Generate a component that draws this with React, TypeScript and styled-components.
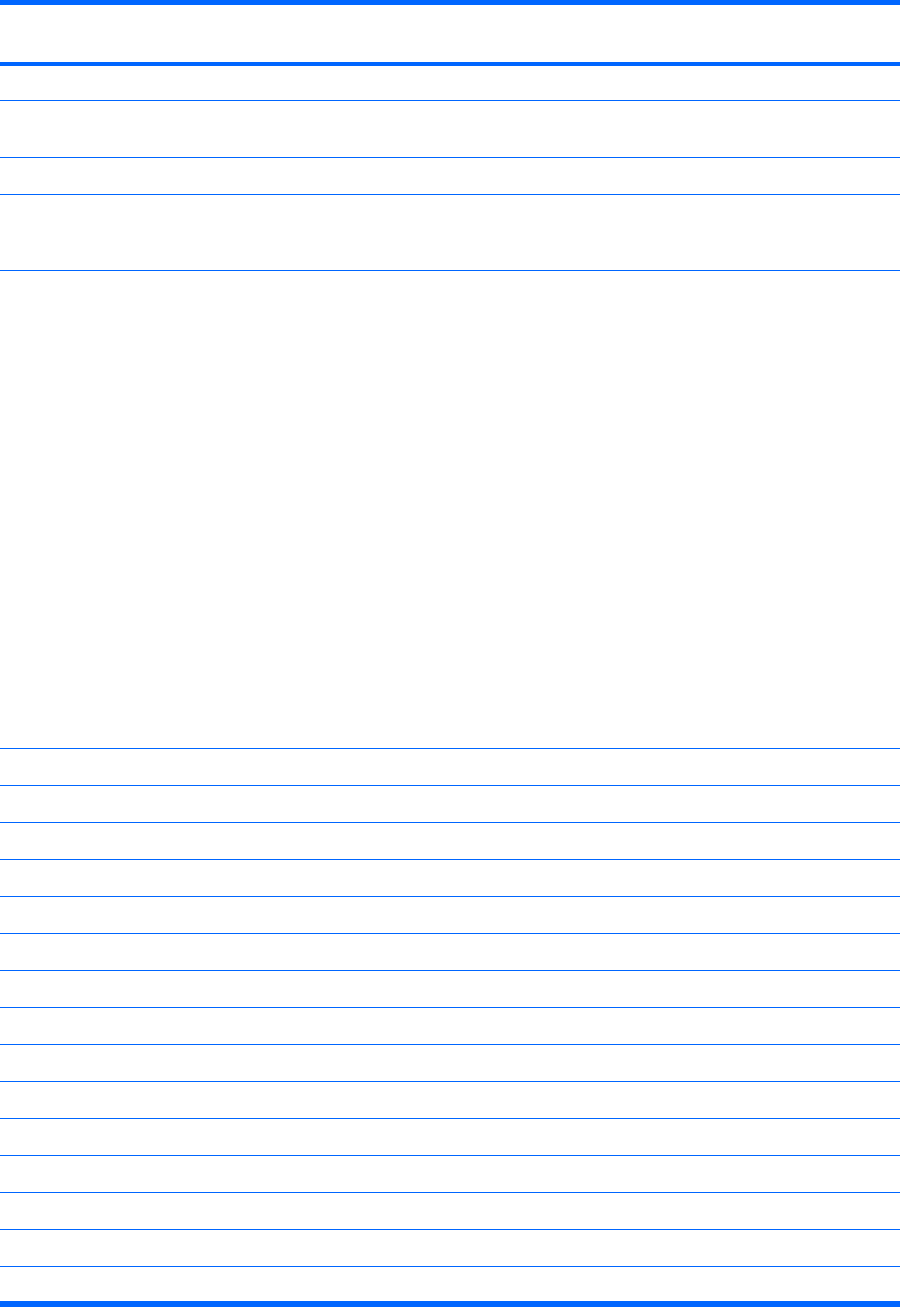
import React from 'react';
import styled, { createGlobalStyle } from 'styled-components';

const blue = '#0066ff';

const GlobalStyle = createGlobalStyle`
  html, body {
    margin: 0;
    padding: 0;
    background: #ffffff;
  }
  body {
    font-family: "Liberation Sans", Arial, sans-serif;
    font-size: 13px;
    color: #ffffff;
  }
`;

const Table = styled.div`
  width: 900px;
  display: flex;
  flex-direction: column;
  border-top: 5px solid ${blue};
  border-bottom: 6px solid ${blue};
`;

const HeaderRow = styled.div`
  height: 57px;
  border-bottom: 4px solid ${blue};
  display: grid;
  grid-template-columns: 1fr 2fr;
`;

const Row = styled.div<{ $h: number; $last?: boolean }>`
  height: ${(p) => p.$h}px;
  border-bottom: ${(p) => (p.$last ? 'none' : `1px solid ${blue}`)};
  display: grid;
  grid-template-columns: 1fr 2fr;
`;

const Cell = styled.div`
  padding: 6px 8px;
`;

// content heights (without the 1px rule), read off the screenshot
const rows = [34, 56, 36, 75, 477, ...Array(14).fill(36), 34];

export default function App() {
  return (
    <>
      <GlobalStyle />
      <Table>
        <HeaderRow>
          <Cell />
          <Cell />
        </HeaderRow>
        {rows.map((h, i) => (
          <Row key={i} $h={h} $last={i === rows.length - 1}>
            <Cell />
            <Cell />
          </Row>
        ))}
      </Table>
    </>
  );
}
